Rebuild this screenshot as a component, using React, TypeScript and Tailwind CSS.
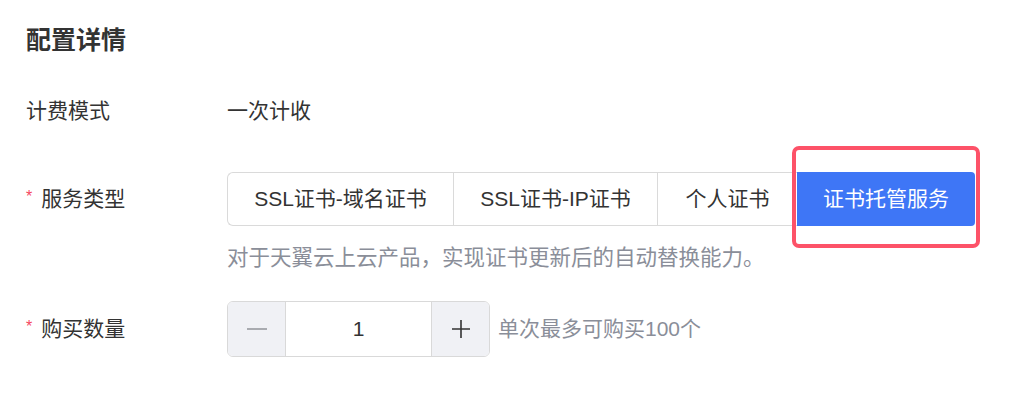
import { useState } from 'react';

const services = [
  { key: 'domain', label: 'SSL证书-域名证书', width: 'w-[226px]' },
  { key: 'ip', label: 'SSL证书-IP证书', width: 'w-[204px]' },
  { key: 'personal', label: '个人证书', width: 'w-[140px]' },
  { key: 'hosting', label: '证书托管服务', width: 'w-[178px]' },
];

function Label({ text, required }: { text: string; required?: boolean }) {
  return (
    <div className="w-[201px] shrink-0 flex items-center text-[21px] text-[#333333]">
      {required && <span className="text-[#f5475f] text-[16px] mr-[9px] -mt-[4px]">*</span>}
      {text}
    </div>
  );
}

export default function App() {
  const [service, setService] = useState('hosting');
  const [count, setCount] = useState(1);

  return (
    <div
      className="w-[1031px] h-[406px] bg-white pl-[26px] pt-[24px]"
      style={{ fontFamily: '"Liberation Sans", "Noto Sans CJK SC", sans-serif' }}
    >
      <h2 className="text-[25px] leading-[32px] font-bold text-[#333333]">配置详情</h2>

      <div className="flex items-center mt-[40px] h-[30px]">
        <Label text="计费模式" />
        <span className="text-[21px] text-[#333333]">一次计收</span>
      </div>

      <div className="flex items-center mt-[46px]">
        <Label text="服务类型" required />
        <div className="flex h-[54px]">
          {services.map((s, i) => {
            const active = s.key === service;
            const first = i === 0;
            const last = i === services.length - 1;
            if (active) {
              return (
                <div key={s.key} className="relative">
                  <button
                    onClick={() => setService(s.key)}
                    className={`${s.width} h-full flex items-center justify-center bg-[#3e76f6] text-white text-[21px] ${last ? 'rounded-r-[4px]' : ''}`}
                  >
                    {s.label}
                  </button>
                  <div className="absolute left-[-5px] right-[-5px] top-[-26px] bottom-[-22px] border-[4px] border-[#fd5268] rounded-[7px] pointer-events-none" />
                </div>
              );
            }
            return (
              <button
                key={s.key}
                onClick={() => setService(s.key)}
                className={`${s.width} h-full flex items-center justify-center border-y border-[#dadada] text-[21px] text-[#333333] ${first ? 'border-l rounded-l-[6px]' : 'border-l'}`}
              >
                {s.label}
              </button>
            );
          })}
        </div>
      </div>

      <div className="flex mt-[17px] h-[30px] items-center">
        <div className="w-[201px] shrink-0" />
        <span className="text-[21.5px] text-[#8a8e99]">对于天翼云上云产品，实现证书更新后的自动替换能力。</span>
      </div>

      <div className="flex items-center mt-[28px]">
        <Label text="购买数量" required />
        <div className="flex h-[56px] w-[263px] border border-[#d9d9d9] rounded-[6px] overflow-hidden">
          <button
            onClick={() => setCount(Math.max(1, count - 1))}
            className="w-[58px] h-full bg-[#f0f1f5] flex items-center justify-center border-r border-[#d9d9d9]"
          >
            <span className="block w-[20px] h-[1.5px] bg-[#a9abb0]" />
          </button>
          <div className="flex-1 flex items-center justify-center text-[21px] text-[#333333]">{count}</div>
          <button
            onClick={() => setCount(Math.min(100, count + 1))}
            className="w-[58px] h-full bg-[#f0f1f5] flex items-center justify-center border-l border-[#d9d9d9]"
          >
            <svg width="20" height="20" viewBox="0 0 20 20">
              <path d="M10 1v18M1 10h18" stroke="#333333" strokeWidth="1.6" />
            </svg>
          </button>
        </div>
        <span className="ml-[8px] text-[21px] text-[#8a8e99]">单次最多可购买100个</span>
      </div>
    </div>
  );
}
